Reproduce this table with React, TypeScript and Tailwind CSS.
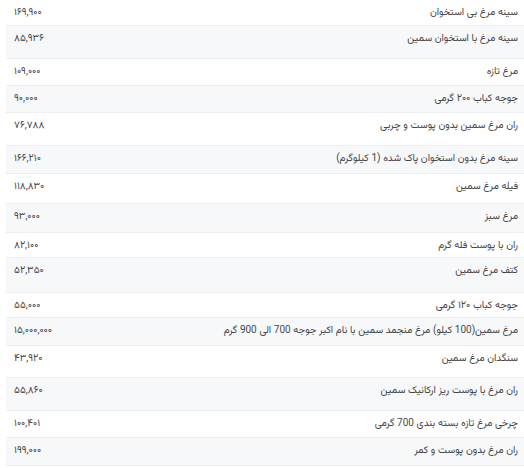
const rows = [
  { name: "سینه مرغ بی استخوان", price: "۱۶۹,۹۰۰", h: "h-[25px]" },
  { name: "سینه مرغ با استخوان سمین", price: "۸۵,۹۳۶", h: "h-[33px]" },
  { name: "مرغ تازه", price: "۱۰۹,۰۰۰", h: "h-[27px]" },
  { name: "جوجه کباب ۲۰۰ گرمی", price: "۹۰,۰۰۰", h: "h-[27px]" },
  { name: "ران مرغ سمین بدون پوست و چربی", price: "۷۶,۷۸۸", h: "h-[33px]" },
  { name: "سینه مرغ بدون استخوان پاک شده (1 کیلوگرم)", price: "۱۶۶,۲۱۰", h: "h-[28px]" },
  { name: "فیله مرغ سمین", price: "۱۱۸,۸۳۰", h: "h-[30px]" },
  { name: "مرغ سبز", price: "۹۳,۰۰۰", h: "h-[29px]" },
  { name: "ران با پوست فله گرم", price: "۸۲,۱۰۰", h: "h-[25px]" },
  { name: "کتف مرغ سمین", price: "۵۲,۳۵۰", h: "h-[35px]" },
  { name: "جوجه کباب ۱۲۰ گرمی", price: "۵۵,۰۰۰", h: "h-[25px]" },
  { name: "مرغ سمین(100 کیلو) مرغ منجمد سمین با نام اکبر جوجه 700 الی 900 گرم", price: "۱۵,۰۰۰,۰۰۰", h: "h-[28px]" },
  { name: "سنگدان مرغ سمین", price: "۴۳,۹۲۰", h: "h-[32px]" },
  { name: "ران مرغ با پوست ریز ارکانیک سمین", price: "۵۵,۸۶۰", h: "h-[33px]" },
  { name: "چرخی مرغ تازه بسته بندی 700 گرمی", price: "۱۰۰,۴۰۱", h: "h-[27px]" },
  { name: "ران مرغ بدون پوست و کمر", price: "۱۹۹,۰۰۰", h: "h-[28px]" },
  { name: "", price: "", h: "h-[20px]" },
]

export default function App() {
  return (
    <div className="w-[524px] h-[468px] overflow-hidden bg-white pl-[6px] font-['Vazirmatn','Noto_Sans_Arabic','Noto_Naskh_Arabic','DejaVu_Sans',sans-serif] text-[10px] text-[#444]">
      {rows.map((row, i) => (
        <div
          key={i}
          className={`${row.h} flex justify-between items-start pt-[6px] pl-[8px] pr-[6px] ${
            i % 2 === 1 ? "bg-[#f7f8f9]" : "bg-white"
          } ${i > 0 ? "border-t border-[#eceef0]" : ""}`}
        >
          <span className="leading-[14px]">{row.price}</span>
          <span dir="rtl" className="leading-[14px]">
            {row.name}
          </span>
        </div>
      ))}
    </div>
  )
}
